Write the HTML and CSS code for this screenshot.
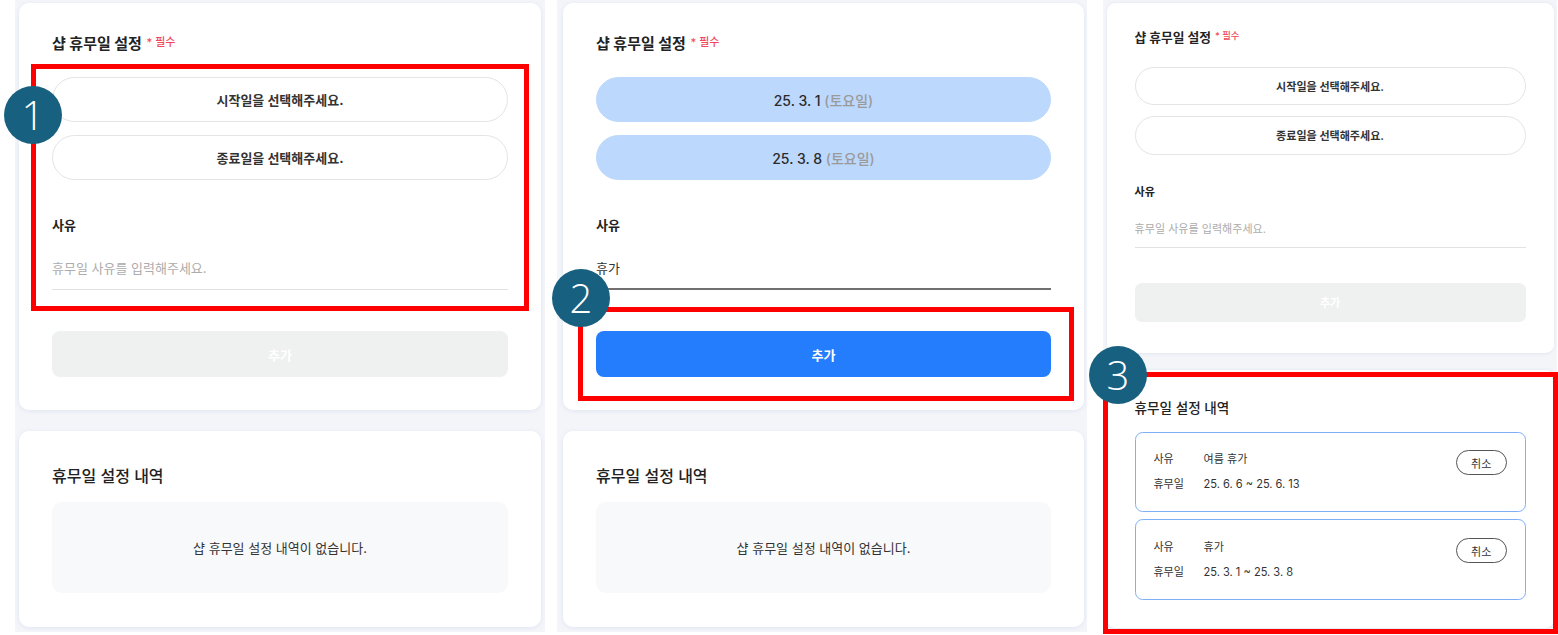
FILE: index.html
```html
<!DOCTYPE html>
<html lang="ko">
<head>
<meta charset="UTF-8" />
<meta name="viewport" content="width=device-width, initial-scale=1.0"/>
<title>샵 휴무일 설정</title>
<link rel="stylesheet" href="styles.css">
</head>
<body>
<div class="sheet">

    <!-- Step 1: empty form -->
    <section class="shot">
        <div class="card">
            <h2 class="card-title">샵 휴무일 설정 <span class="required">* 필수</span></h2>
            <div class="date-pick">
                <button class="pill">시작일을 선택해주세요.</button>
                <button class="pill">종료일을 선택해주세요.</button>
            </div>
            <label class="field-label">사유</label>
            <input class="field" type="text" placeholder="휴무일 사유를 입력해주세요." />
            <button class="submit" disabled>추가</button>
        </div>
        <div class="card history">
            <h3 class="list-title">휴무일 설정 내역</h3>
            <div class="empty">샵 휴무일 설정 내역이 없습니다.</div>
        </div>
    </section>

    <!-- Step 2: dates picked, reason typed -->
    <section class="shot shot-mid">
        <div class="card">
            <h2 class="card-title">샵 휴무일 설정 <span class="required">* 필수</span></h2>
            <div class="date-pick">
                <button class="pill picked">25. 3. 1 <span class="day">(토요일)</span></button>
                <button class="pill picked">25. 3. 8 <span class="day">(토요일)</span></button>
            </div>
            <label class="field-label">사유</label>
            <input class="field filled" type="text" value="휴가" />
            <button class="submit active">추가</button>
        </div>
        <div class="card history">
            <h3 class="list-title">휴무일 설정 내역</h3>
            <div class="empty">샵 휴무일 설정 내역이 없습니다.</div>
        </div>
    </section>

    <!-- Step 3: saved list -->
    <section class="shot shot-small">
        <div class="card">
            <h2 class="card-title">샵 휴무일 설정 <span class="required">* 필수</span></h2>
            <div class="date-pick">
                <button class="pill">시작일을 선택해주세요.</button>
                <button class="pill">종료일을 선택해주세요.</button>
            </div>
            <label class="field-label">사유</label>
            <input class="field" type="text" placeholder="휴무일 사유를 입력해주세요." />
            <button class="submit" disabled>추가</button>
        </div>
        <div class="card history">
            <h3 class="list-title">휴무일 설정 내역</h3>
            <div class="records">
                <div class="record">
                    <dl>
                        <dt>사유</dt><dd>여름 휴가</dd>
                        <dt>휴무일</dt><dd>25. 6. 6 ~ 25. 6. 13</dd>
                    </dl>
                    <button class="cancel">취소</button>
                </div>
                <div class="record">
                    <dl>
                        <dt>사유</dt><dd>휴가</dd>
                        <dt>휴무일</dt><dd>25. 3. 1 ~ 25. 3. 8</dd>
                    </dl>
                    <button class="cancel">취소</button>
                </div>
            </div>
        </div>
    </section>
</div>

<!-- Annotation overlay -->
<div class="mark mark-1"></div>
<div class="mark mark-2"></div>
<div class="mark mark-3"></div>
<div class="badge badge-1">1</div>
<div class="badge badge-2">2</div>
<div class="badge badge-3">3</div>
</body>
</html>
```

FILE: styles.css
```css
html, body {
    margin: 0;
    padding: 0;
    background: #fff;
}

body {
    position: relative;
    width: 1558px;
    height: 635px;
    overflow: hidden;
    font-family: "Inter", "Noto Sans CJK KR", sans-serif;
    color: #222;
}

.sheet {
    display: flex;
    align-items: flex-start;
    padding-left: 15px;
}

/* each screenshot frame */
.shot {
    width: 530px;
    height: 632px;
    box-sizing: border-box;
    padding: 3px 4px 0;
    background: #f3f5f9;
}

.shot-mid {
    margin-left: 12px;
    padding: 3px 3px 0 6px;
}

/* third capture was taken smaller */
.shot-small {
    zoom: 0.85;
    width: 534px;
    height: 744px;
    margin-left: 19px;
}

.card {
    background: #fff;
    border-radius: 10px;
    box-shadow: 0 1px 4px rgba(190, 200, 225, 0.35);
    padding: 29px 33px 33px;
}

.card + .card {
    margin-top: 21px;
}

.card.history {
    padding: 35px 33px 34px;
}

.shot-small .card:first-child {
    padding-bottom: 36px;
}

.card-title {
    margin: 0;
    font-size: 15px;
    font-weight: 700;
    line-height: 20px;
    color: #222;
}

.required {
    color: #f0485a;
    font-size: 11px;
    font-weight: 500;
    vertical-align: 3px;
    margin-left: 1px;
}

.date-pick {
    display: flex;
    flex-direction: column;
    gap: 13px;
    margin-top: 23px;
}

.shot-small .date-pick {
    margin-top: 25px;
}

.pill {
    height: 45px;
    border: 1px solid #e4e4e4;
    border-radius: 23px;
    background: #fff;
    font-family: inherit;
    font-size: 13px;
    font-weight: 700;
    color: #333;
    cursor: pointer;
}

.pill.picked {
    background: #bdd8fd;
    border-color: #bdd8fd;
    font-size: 14px;
    font-weight: 500;
    color: #2a2a2a;
}

.pill .day {
    color: #9a9a9a;
}

.field-label {
    display: block;
    margin-top: 35px;
    font-size: 13px;
    font-weight: 700;
    line-height: 20px;
    color: #222;
}

.field {
    display: block;
    width: 100%;
    height: 44px;
    box-sizing: border-box;
    margin-top: 11px;
    padding: 0;
    border: none;
    border-bottom: 1px solid #e2e2e2;
    background: transparent;
    font-family: inherit;
    font-size: 13px;
    color: #333;
    outline: none;
}

.field::placeholder {
    color: #acacac;
}

.field.filled {
    border-bottom: 2px solid #707070;
}

.submit {
    display: block;
    width: 100%;
    height: 46px;
    margin-top: 41px;
    border: none;
    border-radius: 8px;
    background: #eff0f0;
    color: #fff;
    font-family: inherit;
    font-size: 13px;
    font-weight: 700;
}

.submit.active {
    background: #237dfd;
    cursor: pointer;
}

.list-title {
    margin: 0;
    font-size: 16px;
    font-weight: 500;
    line-height: 20px;
    color: #222;
}

.empty {
    margin-top: 16px;
    height: 91px;
    display: flex;
    align-items: center;
    justify-content: center;
    background: #f8f9fb;
    border-radius: 10px;
    font-size: 13px;
    color: #333;
}

.records {
    display: flex;
    flex-direction: column;
    gap: 9px;
    margin-top: 17px;
}

.record {
    display: flex;
    justify-content: space-between;
    align-items: flex-start;
    border: 1px solid #7fb0f6;
    border-radius: 9px;
    padding: 17px 21px;
}

.record dl {
    margin: 0;
    display: grid;
    grid-template-columns: 59px auto;
    font-size: 13px;
    line-height: 29px;
    color: #333;
}

.record dd {
    margin: 0;
}

.cancel {
    margin-top: 4px;
    width: 60px;
    height: 29px;
    border: 1px solid #555;
    border-radius: 15px;
    background: #fff;
    font-family: inherit;
    font-size: 13px;
    color: #333;
    cursor: pointer;
}

/* red highlight boxes and step numbers drawn over the captures */
.mark {
    position: absolute;
    box-sizing: border-box;
    border: 5px solid #ff0000;
}

.mark-1 { left: 31px; top: 64px; width: 498px; height: 247px; }
.mark-2 { left: 578px; top: 307px; width: 496px; height: 94px; }
.mark-3 { left: 1103px; top: 372px; width: 455px; height: 262px; }

.badge {
    position: absolute;
    width: 58px;
    height: 58px;
    border-radius: 50%;
    background: #18607f;
    color: #fff;
    font-family: "Open Sans", sans-serif;
    font-size: 40px;
    font-weight: 300;
    line-height: 58px;
    text-align: center;
}

.badge-1 { left: 4px; top: 86px; }
.badge-2 { left: 552px; top: 269px; }
.badge-3 { left: 1089px; top: 346px; }
```
